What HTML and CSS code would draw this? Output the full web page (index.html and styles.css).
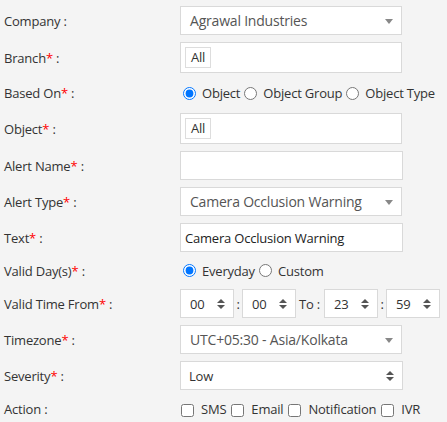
FILE: index.html
```html
<!DOCTYPE html>
<html lang="en">
<head>
	<meta charset="UTF-8">
	<title>Alert</title>
	<link rel="stylesheet" href="styles.css">
</head>
<body>
	<div class="form">
		<div class="row">
			<label class="lbl">Company :</label>
			<div class="ctl select">Agrawal Industries<span class="caret"></span></div>
		</div>
		<div class="row">
			<label class="lbl">Branch<i>*</i> :</label>
			<div class="ctl tagbox"><span class="tag">All</span></div>
		</div>
		<div class="row radios">
			<label class="lbl">Based On<i>*</i> :</label>
			<div class="opts">
				<label><input type="radio" name="based" checked> Object</label>
				<label><input type="radio" name="based"> Object Group</label>
				<label><input type="radio" name="based"> Object Type</label>
			</div>
		</div>
		<div class="row">
			<label class="lbl">Object<i>*</i> :</label>
			<div class="ctl tagbox"><span class="tag">All</span></div>
		</div>
		<div class="row">
			<label class="lbl">Alert Name<i>*</i> :</label>
			<div class="ctl input"></div>
		</div>
		<div class="row">
			<label class="lbl">Alert Type<i>*</i> :</label>
			<div class="ctl select">Camera Occlusion Warning<span class="caret"></span></div>
		</div>
		<div class="row">
			<label class="lbl">Text<i>*</i> :</label>
			<div class="ctl input">Camera Occlusion Warning</div>
		</div>
		<div class="row radios short">
			<label class="lbl">Valid Day(s)<i>*</i> :</label>
			<div class="opts">
				<label><input type="radio" name="days" checked> Everyday</label>
				<label><input type="radio" name="days"> Custom</label>
			</div>
		</div>
		<div class="row">
			<label class="lbl">Valid Time From<i>*</i> :</label>
			<div class="times">
				<div class="num">00<span class="spin"></span></div>
				<span class="sep">:</span>
				<div class="num">00<span class="spin"></span></div>
				<span class="to">To :</span>
				<div class="num">23<span class="spin"></span></div>
				<span class="sep">:</span>
				<div class="num">59<span class="spin"></span></div>
			</div>
		</div>
		<div class="row">
			<label class="lbl">Timezone<i>*</i> :</label>
			<div class="ctl select">UTC+05:30 - Asia/Kolkata<span class="caret"></span></div>
		</div>
		<div class="row">
			<label class="lbl">Severity<i>*</i> :</label>
			<div class="ctl select plain">Low<span class="spin"></span></div>
		</div>
		<div class="row checks">
			<label class="lbl">Action :</label>
			<div class="opts">
				<label><input type="checkbox"> SMS</label>
				<label><input type="checkbox"> Email</label>
				<label><input type="checkbox"> Notification</label>
				<label><input type="checkbox"> IVR</label>
			</div>
		</div>
	</div>
</body>
</html>
```

FILE: styles.css
```css
*{
	margin: 0;
	padding: 0;
	box-sizing: border-box;
}
body{
	background-color: #f4f4f4;
	font-family: "Open Sans", "Liberation Sans", sans-serif;
	font-size: 13px;
	letter-spacing: -0.2px;
	color: #333;
}
.form{
	display: flex;
	flex-direction: column;
	gap: 7px;
	padding: 6px 0 0 4px;
}
.row{
	display: flex;
	align-items: center;
}
.lbl{
	width: 176px;
	flex: none;
}
.lbl i{
	font-style: normal;
	color: #f00;
}
.ctl{
	position: relative;
	width: 223px;
	height: 29px;
	background-color: #fff;
	border: 1px solid #d9d9d9;
	display: flex;
	align-items: center;
}
.select{
	padding-left: 9px;
	font-size: 14px;
	color: #555;
	width: 222px;
}
.select.plain{
	width: 223px;
	padding-left: 8px;
	font-size: 13px;
	color: #333;
}
.caret{
	position: absolute;
	right: 8px;
	top: 12px;
	border-left: 4px solid transparent;
	border-right: 4px solid transparent;
	border-top: 5px solid #888;
}
.input{
	padding-left: 4px;
	color: #222;
}
.tagbox{
	height: 31px;
	width: 222px;
	padding-left: 4px;
}
.tag{
	border: 1px solid #ddd;
	height: 21px;
	line-height: 19px;
	padding: 0 5px;
	color: #333;
}
.radios{
	height: 26px;
}
.radios.short{
	height: 23px;
}
.opts{
	display: flex;
	flex: none;
	align-items: center;
	gap: 1px;
	white-space: nowrap;
	color: #333;
}
.opts label{
	display: flex;
	align-items: center;
}
.opts input{
	margin: 0 6px 0 3px;
	width: 13px;
	height: 13px;
}
.checks{
	height: 24px;
}
.checks .opts{
	gap: 2px;
}
.checks .opts input{
	margin: 2px 7px 0 3px;
}
.checks .opts label:first-child input{
	margin-left: 1px;
}
.times{
	display: flex;
	flex: none;
	align-items: center;
}
.num{
	position: relative;
	flex: none;
	width: 54px;
	height: 29px;
	background-color: #fff;
	border: 1px solid #d9d9d9;
	padding-left: 9px;
	display: flex;
	align-items: center;
}
.sep{
	width: 8px;
	text-align: center;
}
.to{
	padding: 0 4px 0 3px;
}
.spin{
	position: absolute;
	right: 8px;
	top: 9px;
	width: 8px;
	height: 10px;
}
.spin:before,
.spin:after{
	content: "";
	position: absolute;
	left: 0;
	border-left: 4px solid transparent;
	border-right: 4px solid transparent;
}
.spin:before{
	top: 0;
	border-bottom: 4px solid #555;
}
.spin:after{
	bottom: 0;
	border-top: 4px solid #555;
}
```
